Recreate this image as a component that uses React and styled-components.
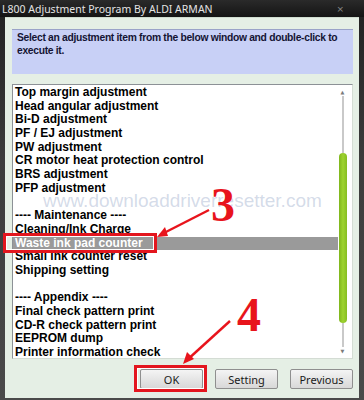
import styled, { createGlobalStyle } from 'styled-components';

const items = [
  'Top margin adjustment',
  'Head angular adjustment',
  'Bi-D adjustment',
  'PF / EJ adjustment',
  'PW adjustment',
  'CR motor heat protection control',
  'BRS adjustment',
  'PFP adjustment',
  '',
  '---- Maintenance ----',
  'Cleaning/Ink Charge',
  'Waste ink pad counter',
  'Small ink counter reset',
  'Shipping setting',
  '',
  '---- Appendix ----',
  'Final check pattern print',
  'CD-R check pattern print',
  'EEPROM dump',
  'Printer information check',
]

const selected = 'Waste ink pad counter'

function App() {
  return (
    <>
      <GlobalStyle />
      <Window>
        <TitleBar>
          <Title>L800 Adjustment Program By ALDI ARMAN</Title>
          <CloseGlyph>×</CloseGlyph>
        </TitleBar>
        <Body>
          <Instruction>
            <Line>Select an adjustment item from the below window and double-click to</Line>
            <Line>execute it.</Line>
          </Instruction>
          <ListBox>
            <Items>
              {items.map((item, i) =>
                <Item key={i} $selected={item === selected}>{item || '\u00a0'}</Item>
              )}
            </Items>
            <ScrollBar>
              <ScrollArrow>▲</ScrollArrow>
              <Track>
                <Thumb />
              </Track>
              <ScrollArrow>▼</ScrollArrow>
            </ScrollBar>
          </ListBox>
          <ButtonRow>
            <Button>OK</Button>
            <Button>Setting</Button>
            <Button>Previous</Button>
          </ButtonRow>
        </Body>

        <Watermark>www.downloaddriverresetter.com</Watermark>
        <Highlight $x={3} $y={233} $w={154} $h={20} />
        <Highlight $x={134} $y={365} $w={73} $h={27} />
        <StepNumber $x={211} $y={181}>3</StepNumber>
        <StepNumber $x={237} $y={291}>4</StepNumber>
        <Arrows width="364" height="400" viewBox="0 0 364 400">
          <line x1="209" y1="210" x2="160" y2="235" stroke="#e8141c" strokeWidth="2.4" />
          <path d="M157,237 L165,227 L168,236 Z" fill="#e8141c" />
          <line x1="230" y1="321" x2="186" y2="361" stroke="#e8141c" strokeWidth="2.4" />
          <path d="M183,364 L187,352 L194,359 Z" fill="#e8141c" />
        </Arrows>
      </Window>
    </>
  )
}

const GlobalStyle = createGlobalStyle`
  html, body {
    margin: 0;
    padding: 0;
    width: 364px;
    height: 400px;
    overflow: hidden;
    background: #2b2b2b;
  }
`
const Window = styled.div`
  position: relative;
  width: 364px;
  height: 400px;
  display: flex;
  flex-direction: column;
  background: linear-gradient(#202020, #3c3c3c 40%, #4a4a4a);
  overflow: hidden;
`
const TitleBar = styled.div`
  height: 17px;
  display: flex;
  align-items: center;
  justify-content: space-between;
  padding: 0 20px 0 2px;
  background: linear-gradient(#2a2a2a, #141414);
`
const Title = styled.span`
  font-family: "Noto Sans", sans-serif;
  font-size: 10.5px;
  color: #e4e4e4;
  white-space: nowrap;
`
const CloseGlyph = styled.span`
  font-family: "DejaVu Sans", sans-serif;
  font-size: 9px;
  color: #8a8a8a;
`
const Body = styled.div`
  flex: 1;
  margin: 0 5px 2px 5px;
  padding: 11px 6px 0 7px;
  display: flex;
  flex-direction: column;
  background: #e5efe5;
  border-top: 1px solid #cfdccf;
`
const Instruction = styled.div`
  height: 45px;
  box-sizing: border-box;
  padding: 1px 0 0 5px;
  background: #c8d0f6;
  border-top: 1px solid #9aa3c8;
  font-family: "Liberation Sans", Arial, sans-serif;
  font-weight: bold;
  font-size: 10.3px;
  letter-spacing: -0.3px;
  line-height: 13px;
  color: #141434;
`
const Line = styled.div`
  white-space: nowrap;
`
const ListBox = styled.div`
  margin-top: 10px;
  height: 275px;
  box-sizing: border-box;
  display: flex;
  background: #ffffff;
  border: 1px solid #8c9196;
  border-right-color: #d4dcd4;
  border-bottom-color: #d4dcd4;
  overflow: hidden;
`
const Items = styled.div`
  flex: 1;
  padding-top: 1px;
  display: flex;
  flex-direction: column;
`
const Item = styled.div`
  flex-shrink: 0;
  height: 13.7px;
  line-height: 13.7px;
  padding-left: 2px;
  margin-right: -2px;
  font-family: "Liberation Sans", Arial, sans-serif;
  font-weight: bold;
  font-size: 12px;
  white-space: nowrap;
  color: ${p => p.$selected ? '#ffffff' : '#000000'};
  background: ${p => p.$selected ? '#9a9a9a' : 'transparent'};
`
const ScrollBar = styled.div`
  width: 13px;
  display: flex;
  flex-direction: column;
  align-items: center;
  padding: 3px 3px 3px 0;
`
const ScrollArrow = styled.span`
  font-family: "DejaVu Sans", sans-serif;
  font-size: 5px;
  line-height: 8px;
  color: #7a7a7a;
`
const Track = styled.div`
  flex: 1;
  width: 8px;
  padding-top: 57px;
  padding-bottom: 24px;
  display: flex;
  flex-direction: column;
  background: linear-gradient(90deg, transparent 3px, #c9c9c9 3px, #c9c9c9 5px, transparent 5px);
`
const Thumb = styled.div`
  flex: 1;
  border-radius: 4px;
  background: linear-gradient(90deg, #7fb61c, #9ed330 50%, #86bd22);
`
const ButtonRow = styled.div`
  margin-top: 10px;
  display: flex;
  justify-content: flex-end;
  gap: 12px;
`
const Button = styled.div`
  width: 63px;
  height: 20px;
  box-sizing: border-box;
  display: flex;
  align-items: center;
  justify-content: center;
  border: 1px solid #8f8f8f;
  border-radius: 2px;
  background: linear-gradient(#f4f4f4, #e6e6e6 50%, #d8d8d8);
  font-family: "Noto Sans", sans-serif;
  font-size: 11px;
  color: #1a1a1a;
`
const Watermark = styled.div`
  position: absolute;
  left: 43px;
  top: 190px;
  font-family: "Liberation Sans", Arial, sans-serif;
  font-size: 19px;
  color: rgba(160, 175, 205, 0.45);
  white-space: nowrap;
  pointer-events: none;
`
const Highlight = styled.div`
  position: absolute;
  left: ${p => p.$x}px;
  top: ${p => p.$y}px;
  width: ${p => p.$w}px;
  height: ${p => p.$h}px;
  box-sizing: border-box;
  border: 3px solid #e3161e;
  box-shadow: inset 0 0 0 1px #ffffff;
`
const StepNumber = styled.div`
  position: absolute;
  left: ${p => p.$x}px;
  top: ${p => p.$y}px;
  font-family: "Liberation Serif", "Times New Roman", serif;
  font-weight: bold;
  font-size: 48px;
  line-height: 48px;
  color: #e8141c;
`
const Arrows = styled.svg`
  position: absolute;
  left: 0;
  top: 0;
  pointer-events: none;
`

export default App;
